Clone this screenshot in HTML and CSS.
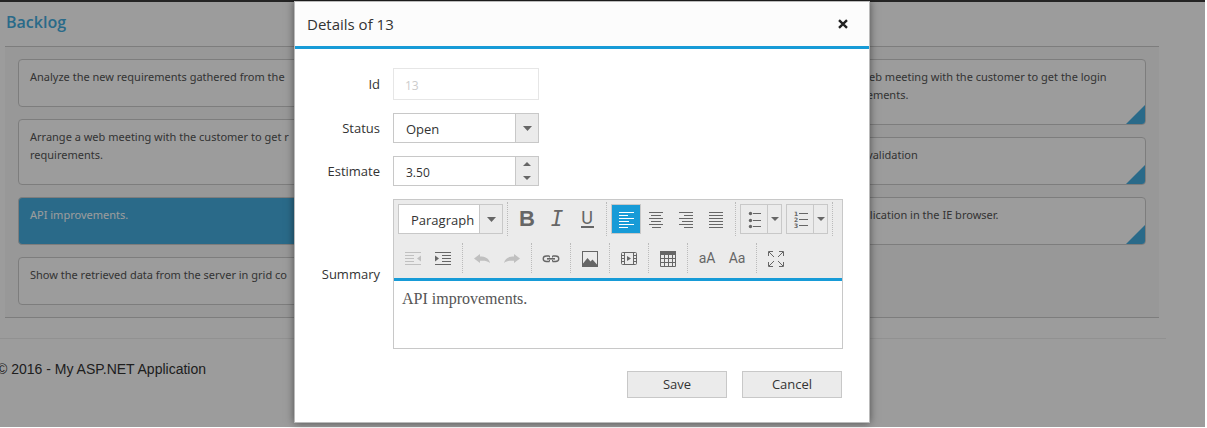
FILE: index.html
```html
<!DOCTYPE html>
<html lang="en">
<head>
<meta charset="utf-8">
<title>Backlog</title>
<link rel="stylesheet" href="styles.css">
</head>
<body>
<div class="page">
  <main class="content">
    <h1 class="heading">Backlog</h1>
    <div class="board">
      <section class="column">
        <article class="card">Analyze the new requirements gathered from the</article>
        <article class="card">Arrange a web meeting with the customer to get r<br>requirements.</article>
        <article class="card card-selected">API improvements.</article>
        <article class="card">Show the retrieved data from the server in grid co</article>
      </section>
      <section class="column"></section>
      <section class="column">
        <article class="card card-tagged">Arrange a web meeting with the customer to get the login<br>page requirements.</article>
        <article class="card card-tagged">Login page validation</article>
        <article class="card card-tagged">Test the application in the IE browser.</article>
      </section>
    </div>
  </main>
  <footer class="footer">© 2016 - My ASP.NET Application</footer>

  <div class="overlay">
    <form class="dialog" role="dialog" aria-labelledby="dialog-title">
      <header class="dialog-header">
        <h2 class="dialog-title" id="dialog-title">Details of 13</h2>
        <button class="close" type="button" aria-label="Close">
          <svg width="10" height="10" viewBox="0 0 10 10"><path d="M1 1.2 9 8.8M9 1.2 1 8.8" stroke="#222" stroke-width="2.4"/></svg>
        </button>
      </header>
      <div class="fields">
        <label for="id">Id</label>
        <input class="box box-id" id="id" value="13" disabled>

        <label for="status">Status</label>
        <div class="box combo">
          <select class="combo-field" id="status"><option>Open</option></select>
          <span class="combo-side"><svg width="9" height="5" viewBox="0 0 9 5"><path d="M0 0h9L4.500 5z"/></svg></span>
        </div>

        <label for="estimate">Estimate</label>
        <div class="box combo">
          <input class="combo-field combo-number" id="estimate" value="3.50">
          <span class="combo-side">
            <button class="spin" type="button" aria-label="Increase"><svg width="8" height="4" viewBox="0 0 8 4"><path d="M0 4h8L4 0z"/></svg></button>
            <button class="spin" type="button" aria-label="Decrease"><svg width="8" height="4" viewBox="0 0 8 4"><path d="M0 0h8L4 4z"/></svg></button>
          </span>
        </div>

        <label for="summary">Summary</label>
        <div class="editor">
          <div class="toolbar">
            <div class="row row-top">
              <div class="group">
                <div class="format">
                  <select class="format-field" aria-label="Format"><option>Paragraph</option></select>
                  <span class="combo-side"><svg width="9" height="5" viewBox="0 0 9 5"><path d="M0 0h9L4.500 5z"/></svg></span>
                </div>
              </div>
              <div class="group">
                <button class="tool bold" type="button">B</button>
                <button class="tool italic" type="button">I</button>
                <button class="tool underline" type="button"><span>U</span></button>
              </div>
              <div class="group">
                <button class="tool active" type="button" aria-label="Align left"><svg class="line" viewBox="0 0 30 30"><path d="M8 8.500h15M8 11.500h9M8 14.500h15M8 17.500h10M8 20.500h15M8 23.500h9"/></svg></button>
                <button class="tool" type="button" aria-label="Align center"><svg class="line" viewBox="0 0 30 30"><path d="M8 8.500h14M10 11.500h10M8 14.500h14M10 17.500h10M8 20.500h14M11 23.500h9"/></svg></button>
                <button class="tool" type="button" aria-label="Align right"><svg class="line" viewBox="0 0 30 30"><path d="M8 8.500h14M13 11.500h9M8 14.500h14M11 17.500h11M8 20.500h14M13 23.500h9"/></svg></button>
                <button class="tool" type="button" aria-label="Justify"><svg class="line" viewBox="0 0 30 30"><path d="M8 8.500h14M8 11.500h14M8 14.500h14M8 17.500h14M8 20.500h14M8 23.500h14"/></svg></button>
              </div>
              <div class="group group-split">
                <div class="split">
                  <button class="split-main" type="button" aria-label="Bulleted list"><svg class="line" width="26" height="28" viewBox="0 0 26 28"><path d="M12 8.500h8M12 15.500h8M12 21.500h8"/><g fill="#666" stroke="none"><circle cx="9.500" cy="8.500" r="1.700"/><circle cx="9.500" cy="15.500" r="1.700"/><circle cx="9.500" cy="21.500" r="1.700"/></g></svg></button>
                  <button class="split-side" type="button" aria-label="Bullet styles"><svg width="8" height="4" viewBox="0 0 8 4"><path d="M0 0h8L4 4z"/></svg></button>
                </div>
                <div class="split">
                  <button class="split-main" type="button" aria-label="Numbered list"><svg class="line" width="26" height="28" viewBox="0 0 26 28"><path d="M12 8.500h9M12 14.500h9M12 20.500h9"/><g class="digits"><text x="7" y="11">1</text><text x="7" y="17">2</text><text x="7" y="23">3</text></g></svg></button>
                  <button class="split-side" type="button" aria-label="Number styles"><svg width="8" height="4" viewBox="0 0 8 4"><path d="M0 0h8L4 4z"/></svg></button>
                </div>
              </div>
            </div>
            <div class="row">
              <div class="group">
                <button class="tool" type="button" disabled aria-label="Outdent"><svg class="line" viewBox="0 0 30 30"><path d="M7 9.500h16M7 12.500h9M7 15.500h9M7 18.500h9M7 21.500h16"/><path class="solid" d="M23 12.500v6l-4-3z"/></svg></button>
                <button class="tool" type="button" aria-label="Indent"><svg class="line" viewBox="0 0 30 30"><path d="M7 9.500h16M14 12.500h9M14 15.500h9M14 18.500h9M7 21.500h16"/><path class="solid" d="M7 12.500v6l4-3z"/></svg></button>
              </div>
              <div class="group">
                <button class="tool" type="button" disabled aria-label="Undo"><svg viewBox="0 0 30 30"><path d="M7 15.500 13 11v2.500c5 0 9 1.500 10 6.500-2.500-2.200-5.500-2.500-10-2.300v2.300z"/></svg></button>
                <button class="tool" type="button" disabled aria-label="Redo"><svg viewBox="0 0 30 30"><path d="M23 15.500 17 11v2.500c-5 0-9 1.500-10 6.500 2.500-2.200 5.500-2.500 10-2.300v2.300z"/></svg></button>
              </div>
              <div class="group">
                <button class="tool" type="button" aria-label="Link"><svg class="line" viewBox="0 0 30 30"><path d="M13.500 18.500h-3a3 2.500 0 0 1 0-5.500h3M16.500 13h3a3 2.500 0 0 1 0 5.500h-3" stroke-width="1.300"/><path d="M11 15.800h8" stroke-width="1.600"/><path d="M13.500 13v1.500M13.500 17v1.500M16.500 13v1.500M16.500 17v1.500"/></svg></button>
              </div>
              <div class="group">
                <button class="tool" type="button" aria-label="Image"><svg class="line" viewBox="0 0 30 30"><rect x="7.500" y="8.500" width="15" height="15"/><path class="solid" d="M8 23v-2.500l4.500-5.500 3 3.500 2-2 4.500 5V23z"/></svg></button>
              </div>
              <div class="group">
                <button class="tool" type="button" aria-label="Video"><svg class="line" viewBox="0 0 30 30"><rect x="7.500" y="9.500" width="15" height="12" rx="1"/><path d="M10.500 9.500v12M19.500 9.500v12M8 12.500h2M8 15.500h2M8 18.500h2M20 12.500h2M20 15.500h2M20 18.500h2"/><path class="solid" d="M13 13v5l4-2.500z"/></svg></button>
              </div>
              <div class="group">
                <button class="tool" type="button" aria-label="Table"><svg class="line" viewBox="0 0 30 30"><path d="M7.500 8v15.500h15V8M11.500 12v11M15.500 12v11M19.500 12v11M8 15.500h14M8 19.500h14"/><path class="solid" d="M7 8h16v4H7z"/></svg></button>
              </div>
              <div class="group">
                <button class="tool case" type="button">aA</button>
                <button class="tool case" type="button">Aa</button>
              </div>
              <div class="group">
                <button class="tool" type="button" aria-label="Full screen"><svg class="line" viewBox="0 0 30 30"><path d="M7.500 13V8.500H12M8 9l5 5M18 8.500h4.500V13M22 9l-5 5M7.500 19v4.500H12M8 23l5-5M18 23.500h4.500V19M22 23l-5-5"/></svg></button>
              </div>
            </div>
          </div>
          <textarea class="editor-text" id="summary">API improvements.</textarea>
        </div>
      </div>
      <div class="actions">
        <button class="action" type="submit">Save</button>
        <button class="action" type="button">Cancel</button>
      </div>
    </form>
  </div>
</div>
</body>
</html>
```
FILE: styles.css
```css
* {
  box-sizing: border-box;
}

body {
  margin: 0;
  padding: 0 2px 1px 0;
  background: #fff;
  color: #333;
  font-family: "Open Sans", "Noto Sans", sans-serif;
  overflow: hidden;
}

.page {
  position: relative;
  min-height: calc(100vh - 1px);
  border-top: 2px solid #3c3c3c;
}

.content {
  margin-right: 39px;
  padding: 8px 7px 20px 5px;
  border-bottom: 1px solid #eee;
}

.heading {
  margin: 0 0 12px 1px;
  color: #45aee1;
  font-size: 16px;
  font-weight: 600;
  line-height: 24px;
}

.board {
  display: grid;
  grid-template-columns: repeat(3, 1fr);
  gap: 37px;
  padding: 12px 13px;
  border: solid #cdcdcd;
  border-width: 1px 0;
  background: #f8f8f8;
}

.column {
  display: flex;
  flex-direction: column;
  gap: 12px;
}

.card {
  position: relative;
  padding: 8px 11px 20px;
  border: 1px solid #cdcdcd;
  border-radius: 4px;
  background: #fff;
  color: #555;
  font-family: "Noto Sans", "Open Sans", sans-serif;
  font-size: 11px;
  line-height: 18px;
  white-space: nowrap;
  overflow: hidden;
}

.card-selected {
  background: #45aee1;
  color: #fff;
}

.card-tagged::after {
  content: "";
  position: absolute;
  right: 0;
  bottom: 0;
  width: 19px;
  height: 19px;
  background: #45aee1;
  clip-path: polygon(100% 0, 100% 100%, 0 100%);
}

.footer {
  margin-left: -3px;
  padding-top: 20px;
  font-family: "Liberation Sans", Arial, sans-serif;
  font-size: 14px;
  line-height: 20px;
}

.overlay {
  position: absolute;
  inset: -2px 0 0;
  display: flex;
  justify-content: center;
  align-items: flex-start;
  padding: 1px 41px 0 0;
  background: rgba(0, 0, 0, 0.39);
}

.dialog {
  width: 576px;
  border: 1px solid #bbb;
  background: #fff;
  box-shadow: 0 0 8px rgba(0, 0, 0, 0.5);
}

.dialog-header {
  display: flex;
  justify-content: space-between;
  align-items: center;
  height: 47px;
  padding: 0 16px 0 12px;
  border-bottom: 3px solid #179bd7;
  background: #fcfcfc;
}

.dialog-title {
  margin: 0;
  font-size: 15px;
  font-weight: 400;
}

button {
  padding: 0;
  border: 0;
  background: none;
  color: #666;
  font: inherit;
}

.close {
  display: grid;
  place-items: center;
  width: 20px;
  height: 20px;
}

.fields {
  display: grid;
  grid-template-columns: 85px 450px;
  gap: 13px;
  align-items: center;
  padding: 19px 0 0;
  font-size: 13px;
}

.fields label {
  text-align: right;
}

.box {
  width: 146px;
  height: 30px;
  border: 1px solid #c8c8c8;
  background: #fff;
}

.box-id {
  height: 32px;
  padding: 2px 11px 0;
  border-color: #e6e6e6;
  color: #ccc;
  font: 12px "Open Sans", "Noto Sans", sans-serif;
}

.combo,
.format {
  display: flex;
}

.combo-field,
.format-field {
  flex: 1;
  min-width: 0;
  padding: 2px 0 0 12px;
  border: 0;
  background: #fff;
  color: #333;
  font: 13px "Open Sans", "Noto Sans", sans-serif;
  appearance: none;
}

.combo-number {
  font-size: 12px;
}

.combo-side {
  display: flex;
  flex-direction: column;
  align-items: center;
  justify-content: center;
  width: 23px;
  border-left: 1px solid #c8c8c8;
  background: #ebebeb;
}

.spin {
  display: grid;
  place-items: center;
  width: 100%;
  height: 14px;
}

svg {
  display: block;
  fill: #666;
}

.editor {
  border: 1px solid #c8c8c8;
}

.toolbar {
  display: flex;
  flex-direction: column;
  gap: 7px;
  padding: 2px 0 5px;
  border-bottom: 3px solid #179bd7;
  background: #ebebeb;
}

.row {
  display: flex;
}

.row-top {
  height: 34px;
}

.group {
  display: flex;
  align-items: center;
  padding: 0 4px;
  border-right: 1px dotted #bbb;
}

.row:last-child .group:last-child {
  border-right: 0;
}

.group-split {
  gap: 4px;
}

.format {
  width: 105px;
  height: 30px;
  border: 1px solid #c8c8c8;
}

.tool {
  display: grid;
  place-items: center;
  width: 30px;
  height: 30px;
}

.tool svg {
  width: 30px;
  height: 30px;
}

.line {
  fill: none;
  stroke: #666;
}

.line .solid {
  fill: #666;
  stroke: none;
}

.tool:disabled .line {
  stroke: #c0c0c0;
}

.tool:disabled svg:not(.line),
.tool:disabled .solid {
  fill: #c0c0c0;
}

.active {
  background: #179bd7;
  box-shadow: inset 0 0 0 1px #c8c8c8;
}

.active .line {
  stroke: #fff;
}

.bold {
  font: bold 22px "Liberation Sans", Arial, sans-serif;
}

.italic {
  font: italic 21px "DejaVu Sans Mono", monospace;
}

.underline {
  font: 18px Roboto, sans-serif;
}

.underline span {
  width: 13px;
  border-bottom: 2px solid #666;
  line-height: 16px;
}

.case {
  font: 14px Roboto, sans-serif;
}

.split {
  display: flex;
  width: 42px;
  height: 30px;
  border: 1px solid #c8c8c8;
}

.split-main {
  width: 26px;
}

.split-side {
  display: grid;
  place-items: center;
  flex: 1;
  border-left: 1px solid #c8c8c8;
}

.digits {
  fill: #666;
  stroke: none;
  font: bold 6px "DejaVu Sans", sans-serif;
}

.editor-text {
  display: block;
  width: 100%;
  height: 67px;
  padding: 9px 8px;
  border: 0;
  background: #fff;
  color: #555;
  font: 16px/18px "Liberation Serif", "Times New Roman", serif;
  resize: none;
}

.actions {
  display: flex;
  justify-content: flex-end;
  gap: 15px;
  padding: 22px 27px 24px;
}

.action {
  width: 100px;
  height: 27px;
  padding-bottom: 2px;
  border: 1px solid #c8c8c8;
  background: #ebebeb;
  color: #333;
  font-size: 13px;
}
```
